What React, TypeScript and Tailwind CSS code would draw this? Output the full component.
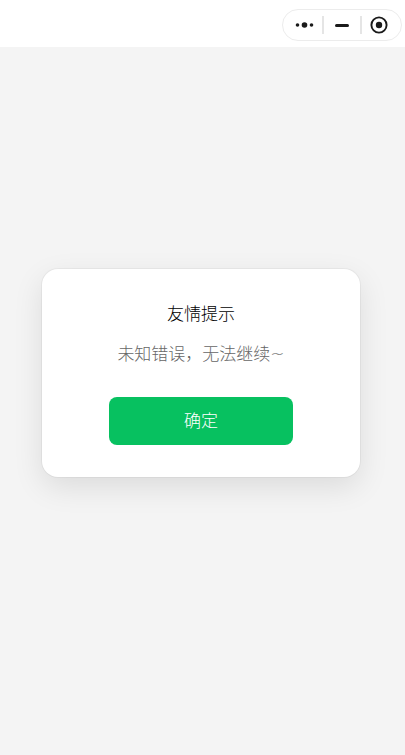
export default function App() {
  return (
    <div className="flex h-[755px] w-full flex-col overflow-hidden bg-[#f4f4f4] font-['DejaVu_Sans','Noto_Sans_CJK_KR',sans-serif]">
      <header className="flex h-[47px] shrink-0 items-start justify-end bg-white pr-[3px] pt-[9px]">
        <div className="flex h-[32px] w-[120px] items-center rounded-full border border-[#ececec] bg-white">
          <div className="flex w-[39px] justify-center pl-[4px]">
            <svg width="20" height="8" viewBox="0 0 20 8" fill="#1a1a1a">
              <circle cx="2.5" cy="4" r="1.8" />
              <circle cx="9.5" cy="4" r="2.8" />
              <circle cx="16.5" cy="4" r="1.8" />
            </svg>
          </div>
          <div className="h-[18px] w-[2px] bg-[#e5e5e5]" />
          <div className="flex flex-1 justify-center pr-[1px]">
            <div className="h-[3px] w-[14px] rounded-sm bg-[#1a1a1a]" />
          </div>
          <div className="h-[18px] w-[2px] bg-[#e5e5e5]" />
          <div className="flex w-[39px] justify-center pr-[5px]">
            <svg width="18" height="18" viewBox="0 0 18 18" fill="none">
              <circle cx="9" cy="9" r="7.6" stroke="#1a1a1a" strokeWidth="1.9" />
              <circle cx="9" cy="9" r="3.2" fill="#1a1a1a" />
            </svg>
          </div>
        </div>
      </header>
      <main className="flex flex-1 items-start justify-center pr-[3px] pt-[222px]">
        <div className="flex h-[208px] w-[318px] flex-col items-center rounded-2xl bg-white pt-[32px] shadow-[0_0_0_1px_rgba(0,0,0,0.04),0_10px_30px_rgba(0,0,0,0.1)]">
          <h1 className="text-[17px] font-light leading-[26px] text-black">友情提示</h1>
          <p className="mt-[14px] text-[17px] font-light leading-[26px] text-[#666666]">未知错误，无法继续~</p>
          <button className="mt-[30px] h-[48px] w-[184px] rounded-lg bg-[#07c160] pt-[2px] text-[17px] font-light text-white">确定</button>
        </div>
      </main>
    </div>
  );
}
